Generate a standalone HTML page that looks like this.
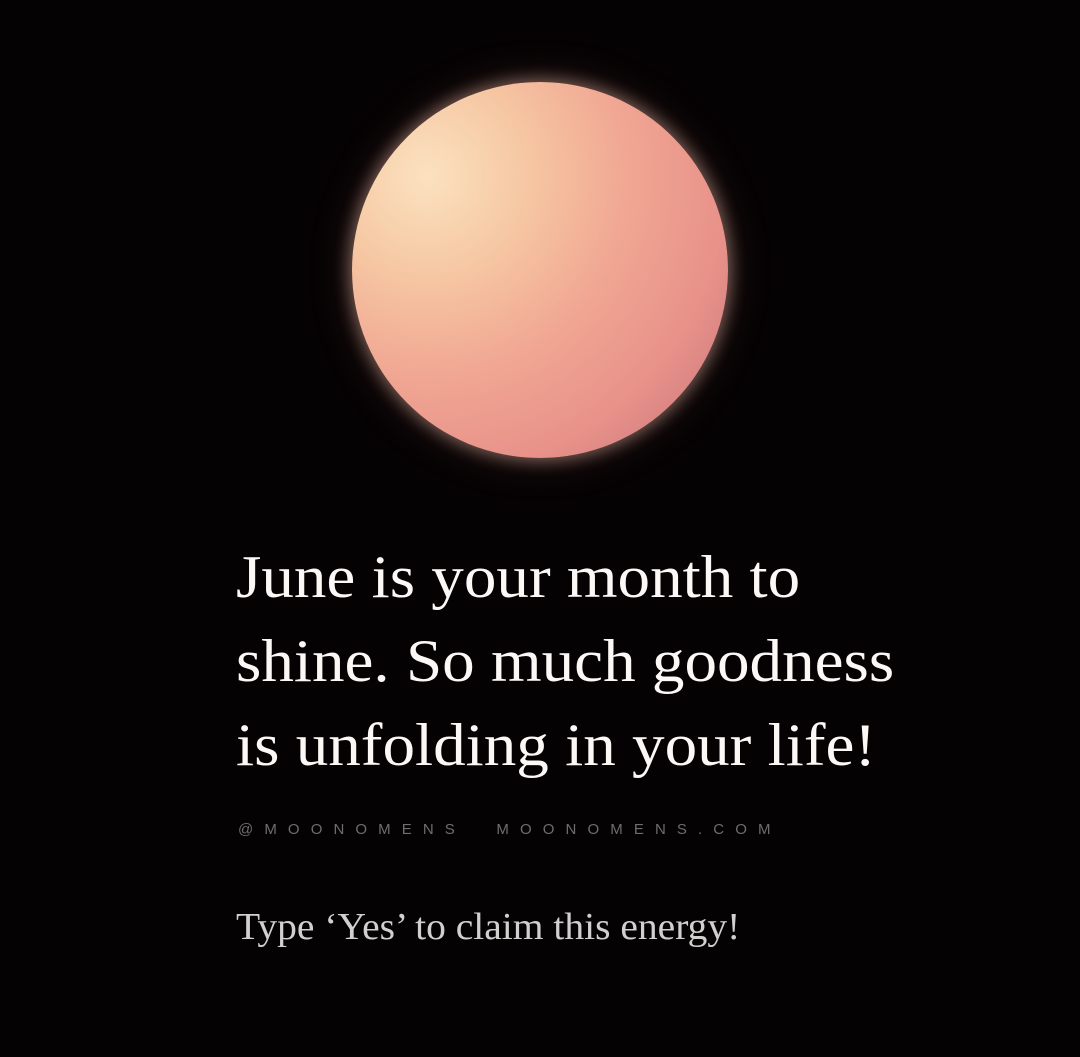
<!DOCTYPE html>
<html><head><style>
html,body{margin:0;padding:0;}
body{width:1080px;height:1057px;background:#050203;position:relative;overflow:hidden;font-family:"Liberation Serif",serif;}
.moon{position:absolute;left:352px;top:82px;width:376px;height:376px;border-radius:50%;
background:radial-gradient(circle at 20% 25%, #fbe2bf 0%, #f6c6a2 25%, #f0a592 50%, #e8928a 72%, #d37f80 88%, #a8606a 100%);
box-shadow:0 0 16px 3px rgba(255,200,180,0.45),0 0 40px 10px rgba(240,150,140,0.10);}
.main{position:absolute;left:236px;top:535px;color:#fbf8f6;font-size:60px;line-height:84px;white-space:nowrap;transform:scaleX(1.085);transform-origin:0 0;}
.small{position:absolute;left:238px;top:821px;color:#6e6e6e;font-family:"Liberation Sans",sans-serif;font-size:15px;letter-spacing:11.1px;white-space:nowrap;}
.type{position:absolute;left:236px;top:905px;color:#d2d0cf;font-size:38px;white-space:nowrap;transform:scaleX(1.04);transform-origin:0 0;}
</style></head><body>
<div class="moon"></div>
<div class="main">June is your month to<br>shine. So much goodness<br>is unfolding in your life!</div>
<div class="small">@MOONOMENS&nbsp;&nbsp;MOONOMENS.COM</div>
<div class="type">Type ‘Yes’ to claim this energy!</div>
</body></html>
